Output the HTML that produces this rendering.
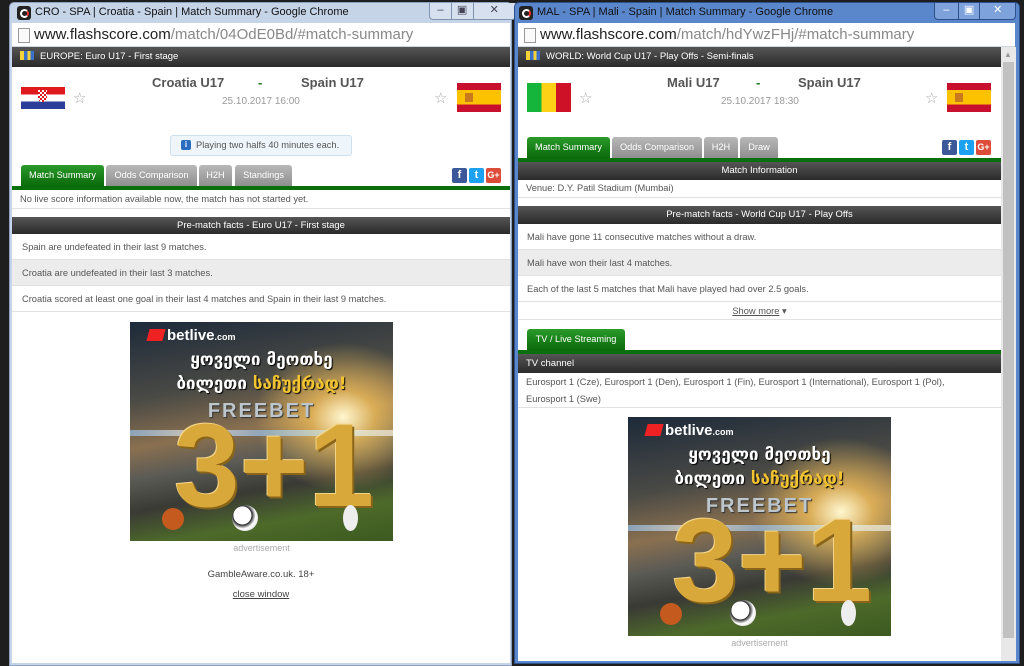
<!DOCTYPE html>
<html><head><meta charset="utf-8">
<style>
*{margin:0;padding:0;box-sizing:border-box}
body{width:1024px;height:666px;overflow:hidden;background:#1e1e1e;font-family:"Liberation Sans","DejaVu Sans",sans-serif;font-size:9.3px;color:#444;position:relative}
.a{position:absolute}
.win{position:absolute;top:2px;border-radius:5px 5px 0 0}
.title{position:absolute;left:0;right:0;top:0;height:20px;font-size:11px;color:#111;padding-left:26px;line-height:19px;white-space:nowrap}
.ico{position:absolute;left:8px;top:3px;width:14px;height:14px;background:#222;border-radius:3px}
.ico:after{content:"";position:absolute;left:3px;top:3px;width:5px;height:5px;border:2px solid #fff;border-radius:50%;border-right-color:#e33}
.btns{position:absolute;top:0;height:17px;border:1px solid #7f93b3;border-top:none;border-radius:0 0 4px 4px;display:flex}
.btns div{height:16px;border-right:1px solid #7f93b3;color:#445;font-size:11px;text-align:center;line-height:15px}
.btns div:last-child{border-right:none}
.addr{position:absolute;height:24px;background:#fff;font-size:15px;line-height:24px;color:#222;padding-left:22px;border-bottom:1px solid #cfd6df}
.addr span{color:#888}
.addr:before{content:"";position:absolute;left:6px;top:5px;width:10px;height:13px;border:1px solid #999;background:#fafafa}
.bar{position:absolute;height:20px;background:linear-gradient(#555,#2a2a2a);color:#fff;font-size:9.5px;line-height:20px}
.wm{display:inline-block;width:14px;height:9px;background:linear-gradient(90deg,#f3d23a 30%,#3a70c8 30%,#3a70c8 55%,#f3d23a 55%,#f3d23a 75%,#3a70c8 75%);margin:0 6px 0 8px;vertical-align:-1px}
.team{position:absolute;font-size:13px;font-weight:bold;color:#555}
.date{position:absolute;color:#999;font-size:10px}
.star{position:absolute;color:#aaa;font-size:15px}
.tab{position:absolute;height:21px;background:linear-gradient(#b8b8b8,#8f8f8f);color:#fff;font-size:9.2px;line-height:21px;text-align:center;border-radius:3px 3px 0 0;white-space:nowrap}
.tab.g{background:linear-gradient(#2a9a2a,#0a6a0a)}
.gl{position:absolute;height:4px;background:#0a6e0a}
.soc{position:absolute;width:15px;height:15px;color:#fff;font-weight:bold;font-size:11px;text-align:center;line-height:15px;border-radius:2px}
.row{position:absolute;height:26px;line-height:26px;padding-left:10px;font-size:9.3px;color:#555;border-bottom:1px solid #e2e2e2;white-space:nowrap}
.row.gr{background:#ececec}
.ad{position:absolute;width:263px;height:219px;overflow:hidden;background:linear-gradient(170deg,#1d2a3a 0%,#4a4a45 30%,#8a7050 48%,#5a5a55 60%,#3a3a35 72%,#4d6a2a 85%,#3c5a20 100%)}
.ad .glow{position:absolute;right:-40px;top:20px;width:180px;height:150px;background:radial-gradient(#fff7d0,rgba(255,200,90,.7) 25%,rgba(200,130,50,0) 70%)}
.ad .lights{position:absolute;left:0;right:0;top:108px;height:6px;background:linear-gradient(90deg,#9cf,#fff,#9cf,#cef,#fff);opacity:.6}
.ad .logo{position:absolute;left:18px;top:5px;color:#fff;font-weight:bold;font-size:15px}
.ad .logo i{display:inline-block;width:16px;height:12px;background:#e22;transform:skewX(-15deg);margin-right:3px;vertical-align:-1px}
.ad .logo small{font-size:9px}
.ad .geo{position:absolute;left:0;right:0;text-align:center;color:#fff;font-weight:bold;font-family:"DejaVu Sans",sans-serif;font-size:17px;text-shadow:1px 1px 1px #000}
.ad .fb{position:absolute;left:0;right:0;top:78px;text-align:center;font-weight:bold;font-size:20px;color:#bcc6cc;letter-spacing:2px;text-shadow:1px 1px 1px #333}
.ad .big{position:absolute;left:44px;top:84px;font-weight:bold;font-size:118px;line-height:120px;color:#d9a83a;text-shadow:2px 2px 0 #8a6418,-1px -1px 0 #f3d58a}
.ad .ball{position:absolute;width:26px;height:26px;border-radius:50%;background:radial-gradient(circle at 40% 40%,#fff 40%,#222 42%,#fff 60%,#bbb);top:183px;left:102px}
.ad .bb{position:absolute;width:22px;height:22px;border-radius:50%;background:#c55a1e;top:186px;left:32px}
.ad .rb{position:absolute;width:15px;height:26px;border-radius:50%;background:#eee;top:183px;left:213px}
.small{position:absolute;font-size:9px;color:#aaa;text-align:center}
</style></head><body>

<!-- LEFT WINDOW -->
<div class="win" style="left:9px;width:503px;height:664px;background:#c6d4e8;border:1px solid #8da2c0"></div>
<div class="a" style="left:9px;top:3px;width:503px;height:20px;">
  <div class="ico"></div>
  <div class="title">CRO - SPA | Croatia - Spain | Match Summary - Google Chrome</div>
  <div class="btns" style="left:420px;width:87px;background:#d6e0ee"><div style="width:22px">–</div><div style="width:22px">▣</div><div style="width:42px">✕</div></div>
</div>
<div class="addr" style="left:12px;top:23px;width:498px">www.flashscore.com<span>/match/04OdE0Bd/#match-summary</span></div>
<div class="a" style="left:12px;top:47px;width:498px;height:616px;background:#fff"></div>
<div class="bar" style="left:12px;top:47px;width:498px"><span class="wm"></span>EUROPE: Euro U17 - First stage</div>
<div class="a" style="left:21px;top:87px;width:44px;height:22px;background:linear-gradient(#e0191f 33%,#fff 33%,#fff 66%,#2b3e9a 66%)"></div>
<div class="a" style="left:38px;top:90px;width:9px;height:12px;background:repeating-conic-gradient(#e0191f 0 25%,#fff 0 50%) 0 0/4px 4px;border-radius:0 0 4px 4px"></div>
<div class="star" style="left:73px;top:89px">☆</div>
<div class="team" style="left:152px;top:75px">Croatia U17</div>
<div class="team" style="left:258px;top:75px;color:#1a7a1a">-</div>
<div class="team" style="left:301px;top:75px">Spain U17</div>
<div class="date" style="left:222px;top:96px">25.10.2017 16:00</div>
<div class="star" style="left:434px;top:89px">☆</div>
<div class="a" style="left:457px;top:83px;width:44px;height:29px;background:linear-gradient(#c8102e 25%,#fcc200 25%,#fcc200 75%,#c8102e 75%)"></div>
<div class="a" style="left:465px;top:93px;width:8px;height:9px;background:#b55a2a;opacity:.7"></div>
<div class="a" style="left:170px;top:135px;width:182px;height:21px;border:1px solid #cfe0ee;background:#eef5fb;border-radius:3px;font-size:9.3px;line-height:19px;padding-left:25px;color:#555;white-space:nowrap">Playing two halfs 40 minutes each.</div>
<div class="a" style="left:181px;top:140px;width:10px;height:10px;background:#2a6cc0;border-radius:2px;color:#fff;font-size:8px;text-align:center;line-height:10px;font-weight:bold">i</div>
<div class="tab g" style="left:21px;top:165px;width:83px">Match Summary</div>
<div class="tab" style="left:106px;top:165px;width:91px">Odds Comparison</div>
<div class="tab" style="left:199px;top:165px;width:33px">H2H</div>
<div class="tab" style="left:235px;top:165px;width:57px">Standings</div>
<div class="soc" style="left:452px;top:168px;background:#3b5998">f</div>
<div class="soc" style="left:469px;top:168px;background:#1da1f2">t</div>
<div class="soc" style="left:486px;top:168px;background:#dd4b39;font-size:9px">G+</div>
<div class="gl" style="left:12px;top:186px;width:498px"></div>
<div class="row" style="left:12px;top:190px;width:498px;height:19px;line-height:19px;padding-left:8px">No live score information available now, the match has not started yet.</div>
<div class="bar" style="left:12px;top:217px;width:498px;height:17px;line-height:17px;text-align:center">Pre-match facts - Euro U17 - First stage</div>
<div class="row" style="left:12px;top:234px;width:498px">Spain are undefeated in their last 9 matches.</div>
<div class="row gr" style="left:12px;top:260px;width:498px">Croatia are undefeated in their last 3 matches.</div>
<div class="row" style="left:12px;top:286px;width:498px">Croatia scored at least one goal in their last 4 matches and Spain in their last 9 matches.</div>
<div class="ad" style="left:130px;top:322px"><div class="glow"></div><div class="lights"></div><div class="logo"><i></i>betlive<small>.com</small></div><div class="geo" style="top:28px">ყოველი მეოთხე</div><div class="geo" style="top:52px">ბილეთი <span style="color:#f3c431">საჩუქრად!</span></div><div class="fb">FREEBET</div><div class="big">3+1</div><div class="bb"></div><div class="ball"></div><div class="rb"></div></div>
<div class="small" style="left:130px;top:543px;width:263px">advertisement</div>
<div class="a" style="left:12px;top:569px;width:498px;text-align:center;font-size:9.5px;color:#444">GambleAware.co.uk. 18+</div>
<div class="a" style="left:12px;top:589px;width:498px;text-align:center;font-size:9.5px;color:#444;text-decoration:underline">close window</div>

<!-- RIGHT WINDOW -->
<div class="win" style="left:514px;width:506px;height:662px;background:#5a87cc;border:1px solid #2d4f8a"></div>
<div class="a" style="left:514px;top:3px;width:506px;height:20px;">
  <div class="ico" style="left:5px"></div>
  <div class="title" style="padding-left:23px">MAL - SPA | Mali - Spain | Match Summary - Google Chrome</div>
  <div class="btns" style="left:420px;width:82px;background:#7ea3dc;border-color:#2d4f8a"><div style="width:24px;border-color:#2d4f8a;color:#fff">–</div><div style="width:22px;border-color:#2d4f8a;color:#fff">▣</div><div style="width:35px;color:#fff">✕</div></div>
</div>
<div class="addr" style="left:518px;top:23px;width:497px">www.flashscore.com<span>/match/hdYwzFHj/#match-summary</span></div>
<div class="a" style="left:518px;top:47px;width:483px;height:614px;background:#fff"></div>
<div class="a" style="left:1001px;top:47px;width:15px;height:614px;background:#e8e8e8"></div>
<div class="a" style="left:1003px;top:62px;width:11px;height:576px;background:#c1c1c1"></div>
<div class="a" style="left:1004px;top:50px;color:#999;font-size:8px">▲</div>
<div class="bar" style="left:518px;top:47px;width:483px"><span class="wm"></span>WORLD: World Cup U17 - Play Offs - Semi-finals</div>
<div class="a" style="left:527px;top:83px;width:44px;height:29px;background:linear-gradient(90deg,#14b53a 33%,#fcd116 33%,#fcd116 66%,#ce1126 66%)"></div>
<div class="star" style="left:579px;top:89px">☆</div>
<div class="team" style="left:667px;top:75px">Mali U17</div>
<div class="team" style="left:756px;top:75px;color:#1a7a1a">-</div>
<div class="team" style="left:798px;top:75px">Spain U17</div>
<div class="date" style="left:721px;top:96px">25.10.2017 18:30</div>
<div class="star" style="left:925px;top:89px">☆</div>
<div class="a" style="left:947px;top:83px;width:44px;height:29px;background:linear-gradient(#c8102e 25%,#fcc200 25%,#fcc200 75%,#c8102e 75%)"></div>
<div class="a" style="left:955px;top:93px;width:8px;height:9px;background:#b55a2a;opacity:.7"></div>
<div class="tab g" style="left:527px;top:137px;width:83px">Match Summary</div>
<div class="tab" style="left:612px;top:137px;width:90px">Odds Comparison</div>
<div class="tab" style="left:704px;top:137px;width:34px">H2H</div>
<div class="tab" style="left:740px;top:137px;width:38px">Draw</div>
<div class="soc" style="left:942px;top:140px;background:#3b5998">f</div>
<div class="soc" style="left:959px;top:140px;background:#1da1f2">t</div>
<div class="soc" style="left:976px;top:140px;background:#dd4b39;font-size:9px">G+</div>
<div class="gl" style="left:518px;top:158px;width:483px"></div>
<div class="bar" style="left:518px;top:162px;width:483px;height:18px;line-height:18px;text-align:center">Match Information</div>
<div class="row" style="left:518px;top:180px;width:483px;height:18px;line-height:17px;padding-left:8px">Venue: D.Y. Patil Stadium (Mumbai)</div>
<div class="bar" style="left:518px;top:206px;width:483px;height:18px;line-height:18px;text-align:center">Pre-match facts - World Cup U17 - Play Offs</div>
<div class="row" style="left:518px;top:224px;width:483px;padding-left:9px">Mali have gone 11 consecutive matches without a draw.</div>
<div class="row gr" style="left:518px;top:250px;width:483px;padding-left:9px">Mali have won their last 4 matches.</div>
<div class="row" style="left:518px;top:276px;width:483px;padding-left:9px">Each of the last 5 matches that Mali have played had over 2.5 goals.</div>
<div class="a" style="left:518px;top:302px;width:483px;height:18px;line-height:18px;text-align:center;border-bottom:1px solid #e2e2e2;color:#555"><u>Show more</u> ▾</div>
<div class="tab g" style="left:527px;top:329px;width:98px">TV / Live Streaming</div>
<div class="gl" style="left:518px;top:350px;width:483px"></div>
<div class="bar" style="left:518px;top:354px;width:483px;height:19px;line-height:19px;padding-left:8px">TV channel</div>
<div class="a" style="left:518px;top:373px;width:483px;height:35px;border-bottom:1px solid #e2e2e2;padding:1px 0 0 8px;line-height:17px;color:#555">Eurosport 1 (Cze), Eurosport 1 (Den), Eurosport 1 (Fin), Eurosport 1 (International), Eurosport 1 (Pol),<br>Eurosport 1 (Swe)</div>
<div class="ad" style="left:628px;top:417px"><div class="glow"></div><div class="lights"></div><div class="logo"><i></i>betlive<small>.com</small></div><div class="geo" style="top:28px">ყოველი მეოთხე</div><div class="geo" style="top:52px">ბილეთი <span style="color:#f3c431">საჩუქრად!</span></div><div class="fb">FREEBET</div><div class="big">3+1</div><div class="bb"></div><div class="ball"></div><div class="rb"></div></div>
<div class="small" style="left:628px;top:638px;width:263px">advertisement</div>
</body></html>
